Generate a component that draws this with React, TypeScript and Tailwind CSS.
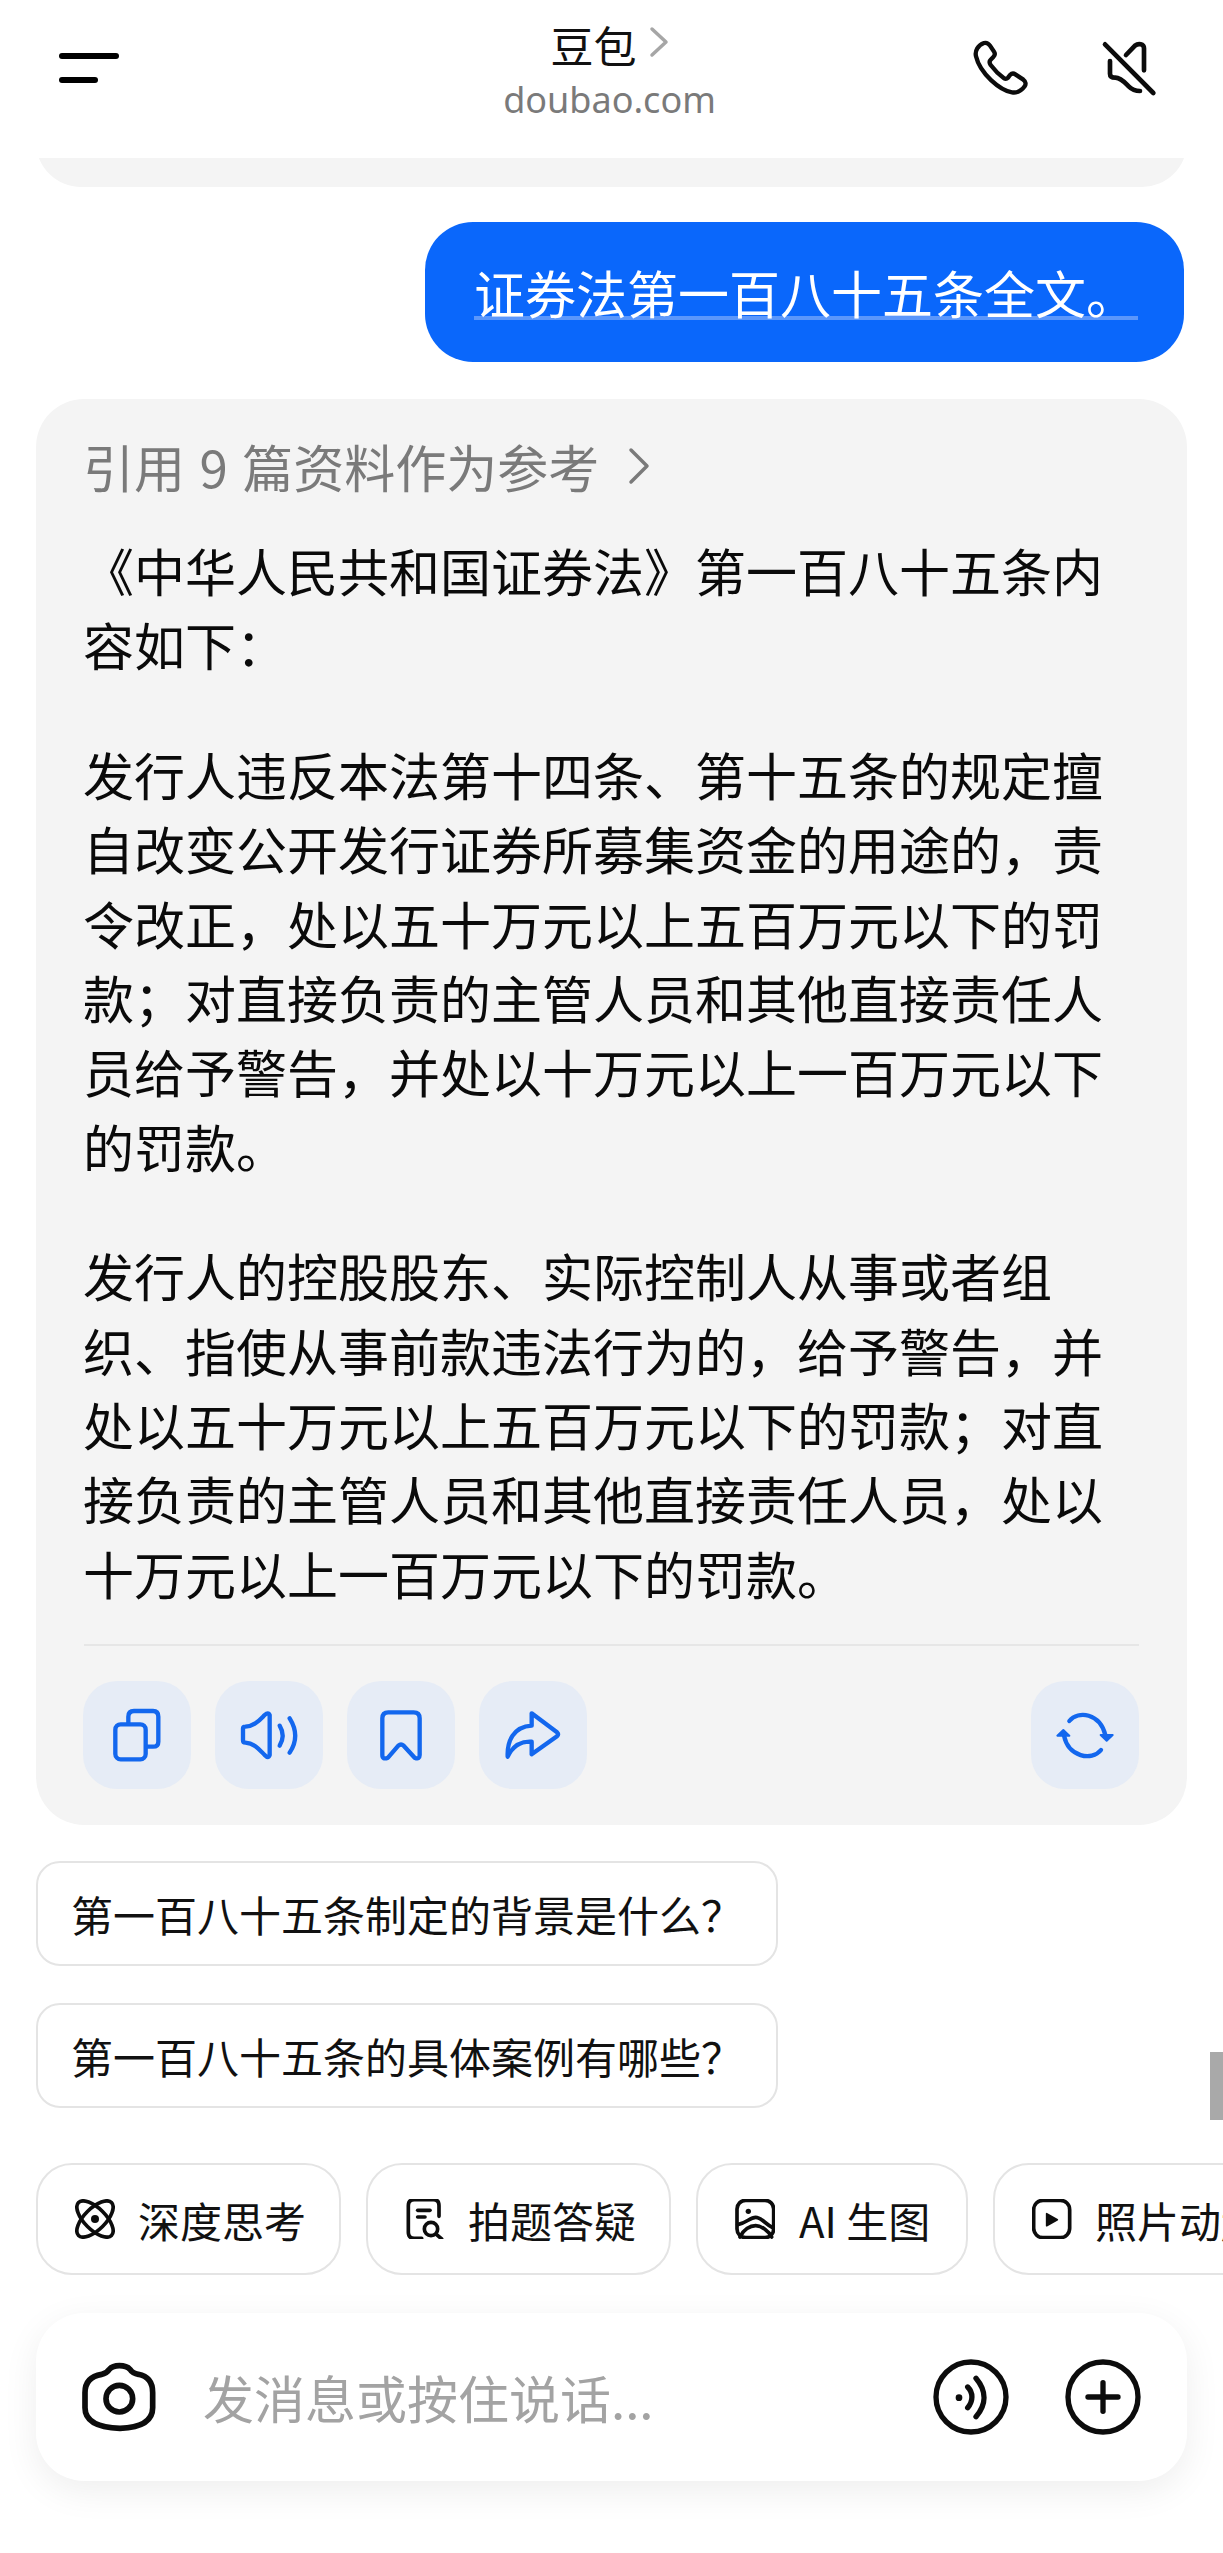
import React from "react";

const Stroke = ({ box, size, w, color, children }: { box: string; size: number; w: number; color: string; children: React.ReactNode }) => (
  <svg viewBox={box} width={size} height={size} fill="none" stroke={color} strokeWidth={w} strokeLinecap="round" strokeLinejoin="round" className="shrink-0">
    {children}
  </svg>
);

const BLUE = "#1367ee";
const INK = "#0c0c0c";

const ActionBtn = ({ children }: { children: React.ReactNode }) => (
  <button className="w-[108px] h-[108px] rounded-[34px] bg-[#e6ecf6] flex items-center justify-center">{children}</button>
);

const Chip = ({ children }: { children: React.ReactNode }) => (
  <div className="w-[742px] h-[105px] rounded-[24px] border-2 border-[#e4e4e4] bg-white flex items-center pl-[33px] text-[42px] text-[#111111]">
    {children}
  </div>
);

const Tool = ({ w, icon, label, gap }: { w: string; icon: React.ReactNode; label: string; gap: string }) => (
  <div className={`${w} ${gap} shrink-0 h-[112px] rounded-[36px] border-2 border-[#e4e4e4] bg-white flex items-center pl-[37px] text-[42px] text-[#111111] whitespace-nowrap`}>
    {icon}
    <span>{label}</span>
  </div>
);

export default function App() {
  return (
    <div className="relative w-[1223px] h-[2553px] overflow-hidden bg-white flex flex-col font-['Noto_Sans_CJK_SC','Noto_Sans',sans-serif]">
      {/* Header */}
      <header className="h-[158px] flex items-start shrink-0">
        <div className="flex-1 pl-[59px] pt-[53px]">
          <div className="w-[60px] h-[6px] rounded-full bg-black" />
          <div className="w-[39px] h-[6px] rounded-full bg-black mt-[18px]" />
        </div>
        <div className="flex flex-col items-center pt-[19px]">
          <div className="flex items-center h-[50px]">
            <span className="text-[43px] leading-[50px] text-[#111111]">豆包</span>
            <svg viewBox="0 0 20 36" width="20" height="36" fill="none" stroke="#a6a6a6" strokeWidth="3.5" strokeLinecap="round" strokeLinejoin="round" className="ml-[12px]">
              <path d="M3 3 L17 16 L3 29" />
            </svg>
          </div>
          <div className="text-[36px] leading-[44px] mt-[9px] text-[#7a7a7a] font-['Noto_Sans',sans-serif]">doubao.com</div>
        </div>
        <div className="flex-1 flex justify-end items-center gap-[70px] pr-[63px] pt-[37px]">
          <Stroke box="30 50 180 180" size={60} w={13} color={INK}>
            <path d="M72 68 C80 66 86 70 90 76 L102 94 C106 100 104 106 100 110 L92 118 C88 122 88 128 92 134 C104 150 118 164 132 174 C136 176 140 176 144 172 L150 164 C154 160 160 158 166 162 L190 178 C198 184 198 192 194 198 C184 212 170 218 156 216 C120 210 60 160 48 108 C44 92 54 74 72 68 Z" />
          </Stroke>
          <Stroke box="420 50 180 180" size={60} w={14} color={INK}>
            <path d="M435 72 L580 218" />
            <path d="M498 104 L525 76 C535 68 552 70 552 84 V150" />
            <path d="M450 122 V160 C450 168 456 172 466 172 C482 172 494 186 506 198 C516 208 526 212 540 212" />
          </Stroke>
        </div>
      </header>

      {/* Previous answer remnant */}
      <div className="mx-[36px] h-[29px] overflow-hidden shrink-0">
        <div className="h-[90px] -mt-[61px] rounded-[48px] bg-[#f4f4f4]" />
      </div>

      {/* User bubble */}
      <div className="self-end mr-[39px] mt-[35px] w-[759px] h-[140px] rounded-[48px] bg-[#0a67fb] pl-[49px] pr-[46px] pt-[45px] shrink-0">
        <div className="text-[51px] leading-[50px] h-[53px] text-white border-b-[4px] border-[#5b97fb] whitespace-nowrap">证券法第一百八十五条全文。</div>
      </div>

      {/* Answer card */}
      <div className="mt-[37px] mx-[36px] rounded-[48px] bg-[#f4f4f4] pl-[47px] pr-[48px] pt-[37px] pb-[36px] shrink-0">
        <div className="flex items-center h-[60px] text-[51px] leading-[60px] text-[#7a7a7a] [word-spacing:3px]">
          <span>引用 9 篇资料作为参考</span>
          <svg viewBox="0 0 24 40" width="24" height="40" fill="none" stroke="#7a7a7a" strokeWidth="3.5" strokeLinecap="round" strokeLinejoin="round" className="ml-[28px]">
            <path d="M4 4 L20 20 L4 36" />
          </svg>
        </div>
        <div className="mt-[37px] text-[51px] leading-[74.4px] text-[#0a0a0a]">
          <p>《中华人民共和国证券法》第一百八十五条内容如下：</p>
          <p className="mt-[55px]">发行人违反本法第十四条、第十五条的规定擅自改变公开发行证券所募集资金的用途的，责令改正，处以五十万元以上五百万元以下的罚款；对直接负责的主管人员和其他直接责任人员给予警告，并处以十万元以上一百万元以下的罚款。</p>
          <p className="mt-[55px]">发行人的控股股东、实际控制人从事或者组织、指使从事前款违法行为的，给予警告，并处以五十万元以上五百万元以下的罚款；对直接负责的主管人员和其他直接责任人员，处以十万元以上一百万元以下的罚款。</p>
        </div>
        <div className="mt-[34px] ml-[1px] h-[2px] bg-[#e6e6e6]" />
        <div className="mt-[35px] flex items-center gap-[24px]">
          <ActionBtn>
            <Stroke box="82 90 180 180" size={60} w={13} color={BLUE}>
              <rect x="107" y="148" width="91" height="105" rx="16" />
              <path d="M146 145 V125 Q146 108 163 108 H220 Q236 108 236 125 V200 Q236 215 220 215 H200" />
            </Stroke>
          </ActionBtn>
          <ActionBtn>
            <Stroke box="478 90 180 180" size={60} w={13} color={BLUE}>
              <path d="M490 160 Q490 155 497 155 C525 153 540 135 555 120 Q566 110 570 120 V240 Q566 252 555 240 C540 225 525 205 497 203 Q490 203 490 196 Z" />
              <path d="M600 152 C612 172 612 192 600 212" />
              <path d="M630 130 C652 165 652 200 630 233" />
            </Stroke>
          </ActionBtn>
          <ActionBtn>
            <Stroke box="874 90 180 180" size={60} w={13} color={BLUE}>
              <path d="M908 130 Q908 112 926 112 H1002 Q1020 112 1020 130 V240 Q1020 255 1005 248 L972 212 Q964 205 956 212 L925 248 Q908 255 908 240 Z" />
            </Stroke>
          </ActionBtn>
          <ActionBtn>
            <Stroke box="1270 90 180 180" size={60} w={13} color={BLUE}>
              <path d="M1356 115 L1432 172 Q1438 178 1432 184 L1356 238 V200 C1320 198 1298 215 1284 245 C1282 200 1300 155 1356 152 Z" />
            </Stroke>
          </ActionBtn>
          <div className="ml-auto">
            <ActionBtn>
              <Stroke box="105 90 180 180" size={60} w={13} color={BLUE}>
                <path d="M148 138 C175 105 240 115 256 180" />
                <path d="M243 225 C215 260 145 245 132 182" />
                <path d="M242 180 H278 L260 197 Z" fill={BLUE} strokeWidth={6} />
                <path d="M112 182 H148 L130 165 Z" fill={BLUE} strokeWidth={6} />
              </Stroke>
            </ActionBtn>
          </div>
        </div>
      </div>

      {/* Suggestions */}
      <div className="mt-[36px] mx-[36px] flex flex-col gap-[37px] shrink-0">
        <Chip>第一百八十五条制定的背景是什么？</Chip>
        <Chip>第一百八十五条的具体案例有哪些？</Chip>
      </div>

      {/* Tools */}
      <div className="mt-[55px] ml-[36px] flex gap-[25px] overflow-hidden shrink-0">
        <Tool
          w="w-[305px]"
          gap="gap-[23px]"
          label="深度思考"
          icon={
            <Stroke box="45 58 120 120" size={40} w={11} color={INK}>
              <ellipse cx="105" cy="118" rx="70" ry="32" transform="rotate(45 105 118)" />
              <ellipse cx="105" cy="118" rx="70" ry="32" transform="rotate(-45 105 118)" />
              <circle cx="105" cy="118" r="12" fill={INK} stroke="none" />
            </Stroke>
          }
        />
        <Tool
          w="w-[305px]"
          gap="gap-[23px]"
          label="拍题答疑"
          icon={
            <Stroke box="1040 58 120 120" size={40} w={11} color={INK}>
              <path d="M1090 176 H1068 Q1050 176 1050 158 V78 Q1050 60 1068 60 H1125 Q1142 60 1142 78 V110" />
              <path d="M1078 92 H1115" />
              <path d="M1078 112 H1100" />
              <circle cx="1118" cy="148" r="20" />
              <path d="M1134 164 L1150 178" />
            </Stroke>
          }
        />
        <Tool
          w="w-[272px]"
          gap="gap-[24px]"
          label="AI 生图"
          icon={
            <Stroke box="130 58 120 120" size={40} w={11} color={INK}>
              <rect x="136" y="62" width="110" height="112" rx="26" />
              <circle cx="170" cy="95" r="8" fill={INK} stroke="none" />
              <path d="M138 135 C165 130 175 113 192 113 C210 113 222 135 245 145" />
              <path d="M145 172 C155 150 175 138 192 138 C210 138 232 155 240 172" />
            </Stroke>
          }
        />
        <Tool
          w="w-[330px]"
          gap="gap-[23px]"
          label="照片动起来"
          icon={
            <Stroke box="1010 58 120 120" size={40} w={11} color={INK}>
              <rect x="1015" y="62" width="108" height="112" rx="28" />
              <path d="M1054 102 V138 L1086 120 Z" fill={INK} strokeWidth={5} />
            </Stroke>
          }
        />
      </div>

      {/* Input */}
      <div className="mt-[38px] mx-[36px] h-[168px] rounded-[48px] bg-white shadow-[0_10px_36px_rgba(0,0,0,0.07)] flex items-center pl-[44px] pr-[44px] shrink-0">
        <Stroke box="30 18 240 240" size={80} w={17} color={INK}>
          <path d="M45 125 Q45 78 95 70 Q110 68 118 55 Q128 44 148 44 Q170 44 180 55 Q188 68 205 70 Q248 78 248 125 V170 Q248 228 150 232 Q45 228 45 170 Z" />
          <circle cx="148" cy="143" r="40" />
        </Stroke>
        <span className="ml-[43px] flex-1 text-[51px] leading-[60px] text-[#a3a3a3]">发消息或按住说话...</span>
        <div className="flex items-center gap-[52px]">
          <Stroke box="33 18 240 240" size={80} w={16} color={INK}>
            <circle cx="153" cy="138" r="105" />
            <circle cx="117" cy="140" r="10" fill={INK} stroke="none" />
            <path d="M143 108 C160 125 160 150 143 170" />
            <path d="M168 82 C200 120 200 160 168 197" />
          </Stroke>
          <Stroke box="430 18 240 240" size={80} w={16} color={INK}>
            <circle cx="550" cy="138" r="105" />
            <path d="M505 138 H595" />
            <path d="M550 95 V181" />
          </Stroke>
        </div>
      </div>

      {/* Scrollbar thumb */}
      <div className="absolute right-0 top-[2052px] w-[13px] h-[68px] bg-[#a9a9a9]" />
    </div>
  );
}
